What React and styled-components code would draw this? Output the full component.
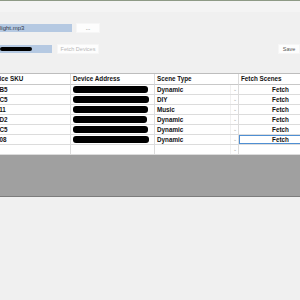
import React from "react";
import styled, { createGlobalStyle } from "styled-components";

const GlobalStyle = createGlobalStyle`
  html, body {
    margin: 0;
    padding: 0;
    background: #f0f0f0;
    font-family: "Liberation Sans", Arial, sans-serif;
  }
`;

const Window = styled.div`
  width: 300px;
  height: 300px;
  overflow: hidden;
  background: #f0f0f0;
`;

const TitleStrip = styled.div`
  height: 11px;
  border-top: 1px solid #8e9a86;
  background: #f4f4f4;
`;

const Toolbar = styled.div`
  display: flex;
  flex-direction: column;
  gap: 11px;
  padding-top: 11px;
`;

const Line = styled.div`
  display: flex;
  align-items: center;
  gap: ${(p) => p.gap || 4}px;
`;

const TextBox = styled.div`
  width: ${(p) => p.w}px;
  height: 8px;
  background: #b5c9e2;
  color: #2f3848;
  font-size: 6px;
  line-height: 8px;
  white-space: nowrap;
  overflow: hidden;
  display: flex;
  align-items: center;
`;

const Scribble = styled.div`
  width: ${(p) => p.w}px;
  height: ${(p) => p.h || 5}px;
  background: #000;
  border-radius: 3px;
`;

const Btn = styled.div`
  width: ${(p) => p.w}px;
  height: 8px;
  background: #fdfdfd;
  border: 1px solid #f6f6f6;
  color: ${(p) => (p.disabled ? "#b8b8b8" : "#555")};
  font-size: 5.5px;
  line-height: 8px;
  text-align: center;
  white-space: nowrap;
`;

const Spacer = styled.div`
  flex: 1;
`;

const GridView = styled.div`
  margin-top: 19px;
  height: 123px;
  background: #a0a0a0;
  border-bottom: 1px solid #7c7c7c;
  overflow: hidden;
`;

const Table = styled.div`
  display: grid;
  grid-template-columns: 85px 84px 84px 84px;
  margin-left: -14px;
  width: 337px;
  background: #fff;
  border-top: 1px solid #bdbdbd;
`;

const Cell = styled.div`
  height: ${(p) => (p.head ? 10 : 9)}px;
  border-right: 1px solid #dcdcdc;
  border-bottom: 1px solid ${(p) => (p.head ? "#c8c8c8" : "#dcdcdc")};
  font-size: 6.3px;
  font-weight: bold;
  color: #111;
  line-height: ${(p) => (p.head ? 10 : 9)}px;
  padding-left: 2px;
  white-space: nowrap;
  overflow: hidden;
  display: flex;
  align-items: center;
`;

const ComboCell = styled(Cell)`
  justify-content: space-between;
  padding-right: 0;
`;

const Arrow = styled.span`
  width: 7px;
  height: 9px;
  border-left: 1px solid #f0f0f0;
  color: #a8a8a8;
  font-size: 5px;
  font-weight: normal;
  display: flex;
  align-items: center;
  justify-content: center;
`;

const FetchCell = styled(Cell)`
  justify-content: center;
  padding-left: 0;
  box-shadow: ${(p) => (p.focus ? "inset 0 0 0 1px #4f8fd3" : "none")};
`;

const rows = [
  { sku: "H61B5", scene: "Dynamic", w: 75 },
  { sku: "H70C5", scene: "DIY", w: 76 },
  { sku: "H6111", scene: "Music", w: 75 },
  { sku: "H60D2", scene: "Dynamic", w: 74 },
  { sku: "H70C5", scene: "Dynamic", w: 75 },
  { sku: "H6008", scene: "Dynamic", w: 76 },
];

export default function App() {
  return (
    <Window>
      <GlobalStyle />
      <TitleStrip />
      <Toolbar>
        <Line>
          <TextBox w={72}>light.mp3</TextBox>
          <Btn w={22}>...</Btn>
        </Line>
        <Line gap={5}>
          <TextBox w={52}>
            <Scribble w={32} h={4} />
          </TextBox>
          <Btn w={40} disabled>
            Fetch Devices
          </Btn>
          <Spacer />
          <Btn w={20}>Save</Btn>
        </Line>
      </Toolbar>
      <GridView>
        <Table>
          <Cell head>Device SKU</Cell>
          <Cell head>Device Address</Cell>
          <Cell head>Scene Type</Cell>
          <Cell head>Fetch Scenes</Cell>
          {rows.map((r, i) => (
            <React.Fragment key={i}>
              <Cell>{r.sku}</Cell>
              <Cell>
                <Scribble w={r.w} h={7} />
              </Cell>
              <ComboCell>
                {r.scene}
                <Arrow>⌄</Arrow>
              </ComboCell>
              <FetchCell focus={i === rows.length - 1}>Fetch</FetchCell>
            </React.Fragment>
          ))}
          <Cell />
          <Cell />
          <ComboCell>
            <span />
            <Arrow>⌄</Arrow>
          </ComboCell>
          <Cell />
        </Table>
      </GridView>
    </Window>
  );
}
